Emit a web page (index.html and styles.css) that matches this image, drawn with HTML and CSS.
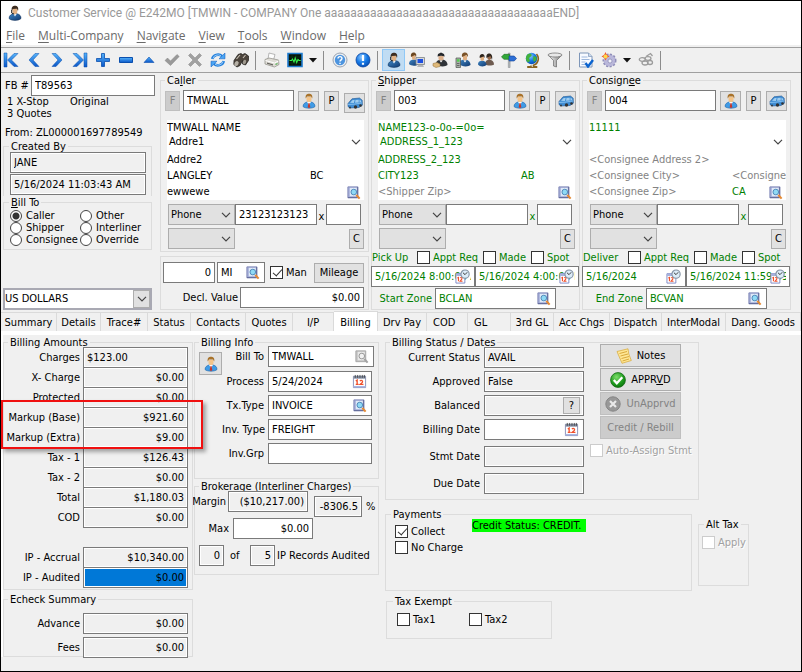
FILE: index.html
```html
<!DOCTYPE html>
<html lang="en">
<head>
<meta charset="utf-8">
<title>Customer Service</title>
<link rel="stylesheet" href="styles.css">
</head>
<body>
<svg class="sprite" aria-hidden="true">
  <defs>
    <linearGradient id="blue" x1="0" y1="0" x2="0" y2="1"><stop offset="0" stop-color="#55b4fb"/><stop offset="1" stop-color="#0a56c8"/></linearGradient>
    <linearGradient id="suit" x1="0" y1="0" x2="1" y2="1"><stop offset="0" stop-color="#3f86c4"/><stop offset="1" stop-color="#123a70"/></linearGradient>
    <linearGradient id="steel" x1="0" y1="0" x2="1" y2="0"><stop offset="0" stop-color="#fff"/><stop offset="1" stop-color="#777"/></linearGradient>
    <radialGradient id="ball" cx=".4" cy=".3" r=".8"><stop offset="0" stop-color="#8fc8ff"/><stop offset=".5" stop-color="#1579e6"/><stop offset="1" stop-color="#0645a8"/></radialGradient>
    <radialGradient id="green" cx=".4" cy=".3" r=".8"><stop offset="0" stop-color="#7ddd6a"/><stop offset=".6" stop-color="#1c9a1c"/><stop offset="1" stop-color="#0a6a0a"/></radialGradient>
  </defs>
  <symbol id="first" viewBox="0 0 16 16"><path d="M1 1h3v14H1z" fill="url(#blue)" stroke="#0a4fae" stroke-width=".5"/><path d="M11 1.500h4L8.500 8l6.500 6.500h-4L4.500 8z" fill="url(#blue)" stroke="#0a4fae" stroke-width=".5"/></symbol>
  <symbol id="prev" viewBox="0 0 16 16"><path d="M9 1.500h4L7 8l6 6.500H9L3 8z" fill="url(#blue)" stroke="#0a4fae" stroke-width=".5"/></symbol>
  <symbol id="next" viewBox="0 0 16 16"><path d="M7 1.500H3L9 8l-6 6.500h4L13 8z" fill="url(#blue)" stroke="#0a4fae" stroke-width=".5"/></symbol>
  <symbol id="last" viewBox="0 0 16 16"><path d="M12 1h3v14h-3z" fill="url(#blue)" stroke="#0a4fae" stroke-width=".5"/><path d="M5 1.500H1L7.500 8 1 14.500h4L11.500 8z" fill="url(#blue)" stroke="#0a4fae" stroke-width=".5"/></symbol>
  <symbol id="plus" viewBox="0 0 16 16"><path d="M6.500 1.500h3v5h5v3h-5v5h-3v-5h-5v-3h5z" fill="url(#blue)" stroke="#0a4fae" stroke-width=".8"/></symbol>
  <symbol id="minus" viewBox="0 0 16 16"><path d="M1.500 5.500h13v5h-13z" fill="url(#blue)" stroke="#0a4fae"/></symbol>
  <symbol id="up" viewBox="0 0 16 16"><path d="M3 10.500 8 5l5 5.500z" fill="url(#blue)" stroke="#0a4fae" stroke-width=".6"/></symbol>
  <symbol id="tick" viewBox="0 0 16 16"><path d="M1 8.500 3.500 6 6.500 9 13 2.500 15.200 4.500 6.500 13.500z" fill="#999" stroke="#858585" stroke-width=".5"/></symbol>
  <symbol id="cross" viewBox="0 0 16 16"><path d="M1.500 3.500 3.500 1.500 8 6l4.500-4.500 2 2L10 8l4.500 4.500-2 2L8 10l-4.500 4.500-2-2L6 8z" fill="#a0a0a0" stroke="#858585" stroke-width=".5"/></symbol>
  <symbol id="refresh" viewBox="0 0 16 16"><path d="M2.300 7A5.800 5 0 0 1 12 4" fill="none" stroke="#2380dd" stroke-width="2.600"/><path d="M9 6.800h6V1z" fill="#4aa5f5" stroke="#0a56b8" stroke-width=".5"/><path d="M13.700 9A5.800 5 0 0 1 4 12" fill="none" stroke="#2380dd" stroke-width="2.600"/><path d="M7 9.200H1V15z" fill="#4aa5f5" stroke="#0a56b8" stroke-width=".5"/><path d="M3 6.500A5 4 0 0 1 11 3.700M13 9.500a5 4 0 0 1-8 2.800" fill="none" stroke="#b6dcfb" stroke-width=".8"/></symbol>
  <symbol id="binoc" viewBox="0 0 16 16"><path d="M5 2.500 8 1.500l1.500 1L12 1.500l3.500 2.500v4.500l-3 4.500-3-1V8.500L7 13.500 4 15 .8 12.500 1 8.500z" fill="#4c443c" stroke="#1d1b18" stroke-width=".7"/><ellipse cx="3.500" cy="11.500" rx="2" ry="2.600" transform="rotate(30 3.500 11.500)" fill="#b5b0a6"/><ellipse cx="11.500" cy="10" rx="1.600" ry="2.300" transform="rotate(20 11.500 10)" fill="#a09a8f"/><path d="M3.500 7 7 3M10 6l2.500-3" stroke="#c9c2b6" stroke-width="1.100"/></symbol>
  <symbol id="printer" viewBox="0 0 16 16"><path d="M5 1l6 1.500L9.500 8 4 7z" fill="#fdfdfd" stroke="#999" stroke-width=".7"/><path d="M1 7.500 5 6l9.500 2 .5 4.500-4.500 2.500L1 12z" fill="#dedcd6" stroke="#8b8983" stroke-width=".7"/><path d="M1.500 8.500 10.500 11 14.500 9" fill="none" stroke="#fff"/><path d="M3 10.500l6 1.700v1.300l-6-1.700z" fill="#66645f"/><path d="M11.500 12.500l2-1" stroke="#4db04d" stroke-width="1.200"/></symbol>
  <symbol id="scope" viewBox="0 0 16 16"><path d="M1 1.500h14v13H1z" fill="#08120a" stroke="#1f7ccf" stroke-width="1.600"/><path d="M2 5h12M2 11h12M5 2.500v11M9 2.500v11" stroke="#0b4a1a" stroke-width=".5"/><path d="M2.500 8.500h2L5.500 7 7 10l1.200-4 1.500 4.500L11 7.500l1 1h1.700" fill="none" stroke="#35ef4d" stroke-width="1.100"/></symbol>
  <symbol id="help" viewBox="0 0 16 16"><circle cx="8" cy="8" r="7" fill="#eceef1" stroke="#9aa4b2"/><circle cx="8" cy="8" r="5.200" fill="#4c94df"/><path d="M6 6.500c0-2.500 4-2.500 4 0C10 7.800 8 8 8 9.600M8 10.800v1.200" fill="none" stroke="#fff" stroke-width="1.400"/></symbol>
  <symbol id="alert" viewBox="0 0 16 16"><circle cx="8" cy="8" r="7" fill="url(#ball)" stroke="#0743a1" stroke-width=".8"/><path d="M8 3v6M8 10.800v2" stroke="#fff" stroke-width="2.200"/></symbol>
  <symbol id="agent" viewBox="0 0 16 16"><path d="M2 13.500C2 10 5 9 6.500 8.500h3C13 9.500 14 11 14 13.500 12 16 4 16 2 13.500z" fill="url(#suit)" stroke="#0d2950" stroke-width=".5"/><path d="M6.300 9 8 11.500 9.700 9z" fill="#eef4fa"/><path d="M5.500 3.500h4.800V7c-.5 3-4.300 3-4.800 0z" fill="#e2b183"/><path d="M4.800 6C4 2 6 .7 8 .7S12 2 11 6l-1-2.200-4.200.2z" fill="#3d2d20"/><path d="M4.700 5v3l2.500 1.200" fill="none" stroke="#222"/></symbol>
  <symbol id="agentpc" viewBox="0 0 16 16"><path d="M0 12c0-3 2-4 4-4.500 4 0 5 2 5 5-2 1.700-7 1.700-9-.5z" fill="url(#suit)"/><path d="M3 3h3.500v4L4.500 8 3 6.500z" fill="#e2b183"/><path d="M2 5C1.500 1.500 3 .5 4.700.5S8 2 7 5L6 3z" fill="#6b4722"/><path d="M7 5.500h8.500v7H7z" fill="#d6d8da" stroke="#7f8387" stroke-width=".8"/><path d="M8.500 7H14v4H8.500z" fill="#1d4ee0"/><path d="M9 13h5l1 2H8z" fill="#b3b6b9"/></symbol>
  <symbol id="driver" viewBox="0 0 16 16"><path d="M4 12c0-3 2-4 5-4.500 4 0 6.500 2 6.500 5.500-2 2-9 2-11.500-1z" fill="#2f3338"/><path d="M6.500 4h5v3c-.7 2-4.200 2-5 0z" fill="#dcb08b"/><path d="M5.500 4.500 6 2l3-1.500 3 1.500.7 2.500C10 3.600 8 3.600 5.500 4.500z" fill="#24262a"/><path d="M7.500 8.500 9 10.500l1.700-2z" fill="#fff"/><path d="M1 11.500l4-1 3 1.500v2.500l-4 1-3-1.500z" fill="#dfb97a" stroke="#8f6e3a" stroke-width=".5"/></symbol>
  <symbol id="phone" viewBox="0 0 16 16"><path d="M4 12c0-3 2-4 5-4.500 4 0 6.500 2 6.500 5.500-2 2-9 2-11.500-1z" fill="url(#suit)"/><path d="M8 3.500h4V7c-.7 2-3.500 2-4 0z" fill="#e2b183"/><path d="M7 5C6.500 1.500 8 .5 10 .5S13.500 2 12.800 5L11.500 3z" fill="#7a5228"/><path d="M8.500 8.500 10 10.500l1.500-2z" fill="#fff"/><path d="M1 6h4.500v9.500H1z" fill="#a9b0a9" stroke="#4f554f" stroke-width=".7"/><path d="M2 7.200h2.500v2.500H2z" fill="#53cf50"/><path d="M2 11.500h2.500M2 13.500h2.500" stroke="#555" stroke-width=".8"/></symbol>
  <symbol id="people" viewBox="0 0 16 16"><path d="M7 12c0-3 2-4 4-4.500 3 .3 5 2 5 5-2 1.500-7 1.500-9-.5z" fill="#6e5b50"/><path d="M9.500 3.500H13V7l-1.700 1L9.500 7z" fill="#9a6a4a"/><path d="M8.500 6C8 2.500 9.500 1.500 11.200 1.500S15 3 14 8L12.500 4z" fill="#322820"/><path d="M0 12.500c0-3 2-3.500 4-4 3 .3 4.500 2 4.500 4.500-2 2-7 2-8.500-.5z" fill="url(#suit)"/><path d="M2.500 4.500H6V8L4.200 9 2.500 8z" fill="#e2b183"/><path d="M1.700 6C1.200 3 2.700 2 4.200 2S7 3 6.500 6L5.500 4.500z" fill="#2e241c"/></symbol>
  <symbol id="sign" viewBox="0 0 16 16"><path d="M7.300 1h1.800v14.500H7.300z" fill="#b5b9bd" stroke="#6d7175" stroke-width=".4"/><path d="M.5 5 3 2.300h5.500v5H3z" fill="#31a838" stroke="#12641a" stroke-width=".6"/><path d="M15.500 6.500 13.200 4H8v5h5.200z" fill="#2d6fd6" stroke="#123f93" stroke-width=".6"/></symbol>
  <symbol id="globe" viewBox="0 0 16 16"><path d="M12.500 2a7 7 0 0 1-3 11.300v1.500h3v1H4v-1h3v-1.300" fill="none" stroke="#8a6420" stroke-width="1.600"/><circle cx="7.500" cy="6.500" r="5.700" fill="url(#ball)"/><path d="M4 2c3-1.500 4 0 3.500 2L5 6l1 3-2 1.500C1 8 1.500 4 4 2zM9.500 4l3 1v3l-2.500 2-1-2.500z" fill="#43b23d"/></symbol>
  <symbol id="funnel" viewBox="0 0 16 16"><path d="M1 3l5.500 5.500V14l3 1V8.500L15 3z" fill="url(#steel)" stroke="#696969" stroke-width=".7"/><ellipse cx="8" cy="3" rx="7" ry="2" fill="#e9e9e9" stroke="#777" stroke-width=".8"/></symbol>
  <symbol id="doccheck" viewBox="0 0 16 16"><path d="M1.500 1h9L14 4.500V15H1.500z" fill="#f7faff" stroke="#7e96b8"/><path d="M10.500 1v3.500H14" fill="#c9d8ec" stroke="#7e96b8" stroke-width=".7"/><path d="M3.500 5h6M3.500 7.500h8M3.500 10h4M3.500 12.500h4" stroke="#9db7dc"/><path d="M7.500 11l2.500 3.500L15 8" fill="none" stroke="#0a63cf" stroke-width="2.400"/></symbol>
  <symbol id="gear" viewBox="0 0 16 16"><circle cx="8.500" cy="8.500" r="6" fill="#b2b0d6" stroke="#8f8db8" stroke-width="2" stroke-dasharray="2 1.500"/><circle cx="8.500" cy="8.500" r="5.500" fill="#b9b7da"/><circle cx="9" cy="9" r="2" fill="#f3f3fa" stroke="#7a78a8" stroke-width=".6"/><path d="M4.500 0l1.300 2.700L8.500 4.500 5.800 5.800 4.500 8.500 3.200 5.800.5 4.500l2.700-1.800z" fill="#f0582f"/><circle cx="4.500" cy="4.400" r="2" fill="#ffd948"/></symbol>
  <symbol id="chain" viewBox="0 0 16 16"><g fill="none" stroke="#9c9c9c" stroke-width="1.300"><ellipse cx="4.300" cy="7.500" rx="3" ry="1.800"/><ellipse cx="10" cy="6.500" rx="3" ry="1.800"/><ellipse cx="7" cy="11" rx="3" ry="2"/><ellipse cx="12" cy="10.500" rx="2.500" ry="2"/><path d="M8 4.500 12.500 1.500 14.500 4"/></g></symbol>
  <symbol id="user" viewBox="0 0 16 16"><path d="M2 13.500C2 10.500 4.500 9.500 6 9h4c2.500.5 4 2 4 4.500-2 2.200-10 2.200-12 0z" fill="#3f9be6" stroke="#1b62a8" stroke-width=".6"/><path d="M6 9l2 3 2-3z" fill="#fff"/><path d="M7.500 10h1l.8 4L8 15.200 6.700 14z" fill="#c5372c"/><path d="M5.500 4h5v3.200c-.7 2.600-4.300 2.600-5 0z" fill="#f4c489"/><path d="M4.700 5.500C4.200 1.800 6 .8 8 .8s3.800 1 3.300 4.700L10 3.500H6z" fill="#a8722a"/></symbol>
  <symbol id="car" viewBox="0 0 16 16"><path d="M1 8.500 5 3.800 12.500 3l2.700 2.200.2 5-3.400 2.300-9.500.5-1.500-1.800z" fill="#3f8dd4" stroke="#1f5692" stroke-width=".6"/><path d="M3 7.800 5.700 4.900l2 .1-.8 3zM8.500 5l3.200-.3v2.700L8 7.800zM12.500 4.700l1.700 1v1.400l-1.700.4z" fill="#9fcdf0"/><path d="M1 9.500l6-.3 8-1.300" fill="none" stroke="#8fc7f2" stroke-width=".8"/><circle cx="8.500" cy="12" r="1.700" fill="#333"/><circle cx="13.500" cy="10.500" r="1.300" fill="#333"/><circle cx="3" cy="12.500" r=".9" fill="#333"/></symbol>
  <symbol id="search" viewBox="0 0 16 16"><path d="M2 2h10.500v11.500H2z" fill="#a3abd6" stroke="#8088b8"/><path d="M4 3h7.500v9H4z" fill="#dfeaf8"/><path d="M12.500 2v11.500H2" fill="none" stroke="#5c6494"/><circle cx="8.300" cy="7.500" r="3" fill="#8fdaf5" stroke="#4d86b8"/><path d="M11 10.500l3.500 4" stroke="#e58a34" stroke-width="2.300"/></symbol>
  <symbol id="searchgray" viewBox="0 0 16 16"><path d="M2 2h10.500v11.500H2z" fill="#c3c3c3" stroke="#a5a5a5"/><path d="M4 3h7.500v9H4z" fill="#e9e9e9"/><circle cx="8.300" cy="7.500" r="3" fill="#f2f2f2" stroke="#939393"/><path d="M11 10.500l3.500 4" stroke="#a3a3a3" stroke-width="2.300"/></symbol>
  <symbol id="cal" viewBox="0 0 16 16"><path d="M1.500 2.500h13v12h-13z" fill="#fff" stroke="#8990b8"/><path d="M1.500 2h13v3h-13z" fill="#8791a5"/><path d="M3.500 1v3M6 1v3M8.500 1v3M11 1v3M13.200 1v3" stroke="#333" stroke-width=".8"/><path d="M4 7.500 5.500 6.500V11M4 11h3M8.500 7.500c1-1.500 3.500-.5 2.500 1.500L8.700 11h3.500" fill="none" stroke="#f0502c" stroke-width="1.400"/><path d="M1.500 13.500h13" stroke="#a9b6e4" stroke-width="1.500"/></symbol>
  <symbol id="calclock" viewBox="0 0 16 16"><path d="M1 5h9.500v10H1z" fill="#fff" stroke="#7d88c4"/><path d="M1 5h9.500v2.500H1z" fill="#a6b2dd"/><path d="M2.500 9.500 3.700 9v4M5.500 9.500c1-1 2.500 0 1.700 1.300L5.500 13H8" fill="none" stroke="#f0502c" stroke-width="1.200"/><circle cx="10.700" cy="5.500" r="4.400" fill="#dcecf8" stroke="#8493a4" stroke-width="1.200"/><path d="M8.500 4 10.700 6 13 3.500" fill="none" stroke="#333"/></symbol>
  <symbol id="note" viewBox="0 0 16 16"><path d="M1 3.500 12 .8 12.800 6l2.500 6.500L6 15.300z" fill="#ffe795" stroke="#d6a634" stroke-width=".7"/><path d="M3.500 5.500 11 3.500M4.500 8 12 6M5.500 10.500 13 8.500M6.500 13l6.500-2" stroke="#d3a031" stroke-width=".9"/></symbol>
  <symbol id="ok" viewBox="0 0 16 16"><circle cx="8" cy="8" r="7.400" fill="url(#green)" stroke="#126912" stroke-width=".8"/><path d="M3.800 8l3 3.300 5.500-6" fill="none" stroke="#fff" stroke-width="2.300"/></symbol>
  <symbol id="no" viewBox="0 0 16 16"><circle cx="8" cy="8" r="7.200" fill="#989898" stroke="#858585"/><path d="M5 5l6 6M11 5l-6 6" stroke="#e9e9e9" stroke-width="2.200"/></symbol>
  <symbol id="chev" viewBox="0 0 10 6"><path d="M1 .8 5 4.800 9 .8" fill="none" stroke="#444" stroke-width="1.200"/></symbol>
  <symbol id="drop" viewBox="0 0 8 5"><path d="M0 0h8L4 4.500z" fill="#111"/></symbol>
</svg>

<div class="window">
  <header class="titlebar"><svg class="ico"><use href="#agent"/></svg><span>Customer Service @ E242MO [TMWIN - COMPANY One aaaaaaaaaaaaaaaaaaaaaaaaaaaaaaaaaaaEND]</span></header>
  <nav class="menu">
    <a href="#"><u>F</u>ile</a><a href="#"><u>M</u>ulti-Company</a><a href="#"><u>N</u>avigate</a><a href="#"><u>V</u>iew</a><a href="#"><u>T</u>ools</a><a href="#"><u>W</u>indow</a><a href="#"><u>H</u>elp</a>
  </nav>
  <div class="toolbar">
    <button aria-label="First"><svg class="ico"><use href="#first"/></svg></button><button aria-label="Previous"><svg class="ico"><use href="#prev"/></svg></button><button aria-label="Next"><svg class="ico"><use href="#next"/></svg></button><button aria-label="Last"><svg class="ico"><use href="#last"/></svg></button><button aria-label="Add"><svg class="ico"><use href="#plus"/></svg></button><button aria-label="Delete"><svg class="ico"><use href="#minus"/></svg></button><button aria-label="Edit"><svg class="ico"><use href="#up"/></svg></button><button aria-label="Post"><svg class="ico"><use href="#tick"/></svg></button><button aria-label="Cancel"><svg class="ico"><use href="#cross"/></svg></button><button aria-label="Refresh"><svg class="ico"><use href="#refresh"/></svg></button><button aria-label="Find"><svg class="ico"><use href="#binoc"/></svg></button>
    <i class="sep"></i>
    <button aria-label="Print"><svg class="ico"><use href="#printer"/></svg></button><button aria-label="Monitor"><svg class="ico"><use href="#scope"/></svg></button><button class="more" aria-label="More"><svg class="arrow"><use href="#drop"/></svg></button>
    <i class="sep"></i>
    <button aria-label="Help"><svg class="ico"><use href="#help"/></svg></button><button aria-label="Alert"><svg class="ico"><use href="#alert"/></svg></button>
    <i class="sep"></i>
    <button class="on" aria-label="Customer service"><svg class="ico"><use href="#agent"/></svg></button><button aria-label="Dispatch"><svg class="ico"><use href="#agentpc"/></svg></button><button aria-label="Driver"><svg class="ico"><use href="#driver"/></svg></button><button aria-label="Mobile"><svg class="ico"><use href="#phone"/></svg></button><button aria-label="Clients"><svg class="ico"><use href="#people"/></svg></button><button aria-label="Route"><svg class="ico"><use href="#sign"/></svg></button><button aria-label="Map"><svg class="ico"><use href="#globe"/></svg></button><button aria-label="Filter"><svg class="ico"><use href="#funnel"/></svg></button>
    <i class="sep"></i>
    <button aria-label="Validate"><svg class="ico"><use href="#doccheck"/></svg></button><button aria-label="Options"><svg class="ico"><use href="#gear"/></svg></button><button class="more" aria-label="More options"><svg class="arrow"><use href="#drop"/></svg></button><button aria-label="Links"><svg class="ico"><use href="#chain"/></svg></button>
    <i class="sep"></i>
  </div>

  <main>
  <section class="upper">
    <div class="left">
      <div class="fb"><label for="fb">FB #</label><input class="box" id="fb" value="T89563"></div>
      <div class="stops"><span>1 X-Stop</span><span>Original</span><span>3 Quotes</span></div>
      <div class="from">From: ZL000001697789549</div>
      <fieldset class="created"><legend>Created By</legend>
        <input class="box ro" aria-label="Created by" value="JANE" readonly>
        <input class="box ro" aria-label="Created on" value="5/16/2024 11:03:43 AM" readonly>
      </fieldset>
      <fieldset class="billto"><legend><u>B</u>ill To</legend>
        <label><input type="radio" name="bt" checked>Caller</label><label><input type="radio" name="bt">Other</label>
        <label><input type="radio" name="bt">Shipper</label><label><input type="radio" name="bt">Interliner</label>
        <label><input type="radio" name="bt">Consignee</label><label><input type="radio" name="bt">Override</label>
      </fieldset>
      <span class="sel currency"><select aria-label="Currency"><option>US DOLLARS</option></select><span class="cap"><svg class="chev"><use href="#chev"/></svg></span></span>
    </div>

    <div class="party">
      <fieldset><legend>Ca<u>l</u>ler</legend>
        <div class="idrow"><button class="btn" disabled>F</button><input class="box" aria-label="Caller code" value="TMWALL"><button class="btn wide" aria-label="Contact"><svg class="ico"><use href="#user"/></svg></button><button class="btn">P</button><button class="btn wide low" aria-label="Vehicle"><svg class="ico"><use href="#car"/></svg></button></div>
        <div class="addr"><span>TMWALL NAME</span><span class="a1">Addre1</span><span class="a2">Addre2</span><span class="pair"><span>LANGLEY</span><span>BC</span></span><span class="pair"><span>ewwewe</span></span><svg class="chev"><use href="#chev"/></svg><svg class="ico"><use href="#search"/></svg></div>
        <div class="phone"><span class="sel"><select aria-label="Caller contact type"><option>Phone</option></select><svg class="chev"><use href="#chev"/></svg></span><input class="box" aria-label="Caller phone" value="23123123123"><label for="cx">x</label><input class="box ext" id="cx"></div>
        <div class="phone"><span class="sel"><select aria-label="Caller contact"><option></option></select><svg class="chev"><use href="#chev"/></svg></span><button class="btn c">C</button></div>
      </fieldset>
      <div class="mileage">
        <div class="mrow"><input class="box num dist" aria-label="Distance" value="0"><span class="field unit"><input class="box" aria-label="Unit" value="MI"><svg class="ico"><use href="#search"/></svg></span><label class="ck"><input type="checkbox" checked>Man</label><button class="btn">Mileage</button></div>
        <div class="mrow"><label class="decl" for="dv">Decl. Value</label><input class="box num" id="dv" value="$0.00"></div>
      </div>
    </div>

    <div class="party go">
      <fieldset><legend><u>S</u>hipper</legend>
        <div class="idrow"><button class="btn" disabled>F</button><input class="box" aria-label="Shipper code" value="003"><button class="btn wide" aria-label="Contact"><svg class="ico"><use href="#user"/></svg></button><button class="btn">P</button><button class="btn wide" aria-label="Vehicle"><svg class="ico"><use href="#car"/></svg></button></div>
        <div class="addr"><span>NAME123-o-0o-=0o=</span><span class="a1">ADDRESS_1_123</span><span class="a2">ADDRESS_2_123</span><span class="pair"><span>CITY123</span><span>AB</span></span><span class="pair hint"><span>&lt;Shipper Zip&gt;</span></span><svg class="chev"><use href="#chev"/></svg><svg class="ico"><use href="#search"/></svg></div>
        <div class="phone"><span class="sel"><select aria-label="Shipper contact type"><option>Phone</option></select><svg class="chev"><use href="#chev"/></svg></span><input class="box" aria-label="Shipper phone"><label for="sx">x</label><input class="box ext" id="sx"></div>
        <div class="phone"><span class="sel"><select aria-label="Shipper contact"><option></option></select><svg class="chev"><use href="#chev"/></svg></span><button class="btn c">C</button></div>
        <div class="flags"><span class="lead">Pick Up</span><label class="ck"><input type="checkbox">Appt Req</label><label class="ck"><input type="checkbox">Made</label><label class="ck"><input type="checkbox">Spot</label></div>
        <div class="dates"><span class="field"><input class="box" aria-label="Pick up from" value="5/16/2024 8:00:00 AM"><svg class="ico"><use href="#calclock"/></svg></span><span class="field"><input class="box" aria-label="Pick up to" value="5/16/2024 4:00:00 PM"><svg class="ico"><use href="#calclock"/></svg></span></div>
        <div class="zone"><label for="sz">Start Zone</label><span class="field"><input class="box" id="sz" value="BCLAN"><svg class="ico"><use href="#search"/></svg></span></div>
      </fieldset>
    </div>

    <div class="party go">
      <fieldset><legend>Consign<u>e</u>e</legend>
        <div class="idrow"><button class="btn" disabled>F</button><input class="box" aria-label="Consignee code" value="004"><button class="btn wide" aria-label="Contact"><svg class="ico"><use href="#user"/></svg></button><button class="btn">P</button><button class="btn wide" aria-label="Vehicle"><svg class="ico"><use href="#car"/></svg></button></div>
        <div class="addr"><span>11111</span><span class="a1">&nbsp;</span><span class="a2 hint">&lt;Consignee Address 2&gt;</span><span class="pair hint"><span>&lt;Consignee City&gt;</span><span>&lt;Consigne</span></span><span class="pair"><span class="hint">&lt;Consignee Zip&gt;</span><span>CA</span></span><svg class="chev"><use href="#chev"/></svg><svg class="ico"><use href="#search"/></svg></div>
        <div class="phone"><span class="sel"><select aria-label="Consignee contact type"><option>Phone</option></select><svg class="chev"><use href="#chev"/></svg></span><input class="box" aria-label="Consignee phone"><label for="nx">x</label><input class="box ext" id="nx"></div>
        <div class="phone"><span class="sel"><select aria-label="Consignee contact"><option></option></select><svg class="chev"><use href="#chev"/></svg></span><button class="btn c">C</button></div>
        <div class="flags"><span class="lead">Deliver</span><label class="ck"><input type="checkbox">Appt Req</label><label class="ck"><input type="checkbox">Made</label><label class="ck"><input type="checkbox">Spot</label></div>
        <div class="dates"><span class="field"><input class="box" aria-label="Deliver from" value="5/16/2024"><svg class="ico"><use href="#calclock"/></svg></span><span class="field"><input class="box" aria-label="Deliver to" value="5/16/2024 11:59:59"><svg class="ico"><use href="#calclock"/></svg></span></div>
        <div class="zone"><label for="ez">End Zone</label><span class="field"><input class="box" id="ez" value="BCVAN"><svg class="ico"><use href="#search"/></svg></span></div>
      </fieldset>
    </div>
  </section>

  <nav class="tabs">
    <a href="#">Summary</a><a href="#">Details</a><a href="#">Trace#</a><a href="#">Status</a><a href="#">Contacts</a><a href="#">Quotes</a><a href="#">I/P</a><a href="#" class="on">Billing</a><a href="#">Drv Pay</a><a href="#" class="start">COD</a><a href="#" class="start">GL</a><a href="#">3rd GL</a><a href="#">Acc Chgs</a><a href="#">Dispatch</a><a href="#">InterModal</a><a href="#">Dang. Goods</a>
  </nav>

  <section class="pane">
    <div class="amounts">
      <fieldset class="bill"><legend>Billing Amounts</legend>
        <div class="row"><label for="b1">Charges</label><input class="box ro" id="b1" value="$123.00" readonly></div>
        <div class="row"><label for="b2">X- Charge</label><input class="box ro num" id="b2" value="$0.00" readonly></div>
        <div class="row"><label for="b3">Protected</label><input class="box ro num" id="b3" value="$0.00" readonly></div>
        <div class="row"><label for="b4">Markup (Base)</label><input class="box ro num" id="b4" value="$921.60" readonly></div>
        <div class="row"><label for="b5">Markup (Extra)</label><input class="box ro num" id="b5" value="$9.00" readonly></div>
        <div class="row"><label for="b6">Tax - 1</label><input class="box ro num" id="b6" value="$126.43" readonly></div>
        <div class="row"><label for="b7">Tax - 2</label><input class="box ro num" id="b7" value="$0.00" readonly></div>
        <div class="row"><label for="b8">Total</label><input class="box ro num" id="b8" value="$1,180.03" readonly></div>
        <div class="row"><label for="b9">COD</label><input class="box ro num" id="b9" value="$0.00" readonly></div>
        <div class="row apart"><label for="b10">IP - Accrual</label><input class="box ro num" id="b10" value="$10,340.00" readonly></div>
        <div class="row"><label for="b11">IP - Audited</label><input class="box ro num picked" id="b11" value="$0.00" readonly></div>
        <div class="marker"></div>
      </fieldset>
      <fieldset class="echeck"><legend>Echeck Summary</legend>
        <div class="row"><label for="e1">Advance</label><input class="box ro num" id="e1" value="$0.00" readonly></div>
        <div class="row"><label for="e2">Fees</label><input class="box ro num" id="e2" value="$0.00" readonly></div>
      </fieldset>
    </div>

    <div class="info">
      <fieldset class="binfo"><legend>Billing Info</legend>
        <button class="btn" aria-label="Bill-to contact"><svg class="ico"><use href="#user"/></svg></button>
        <div class="lines">
          <label for="i1">Bill To</label><span class="field first"><input class="box" id="i1" value="TMWALL"><svg class="ico"><use href="#searchgray"/></svg></span>
          <label for="i2">Process</label><span class="field"><input class="box" id="i2" value="5/24/2024"><svg class="ico"><use href="#cal"/></svg></span>
          <label for="i3">Tx.Type</label><span class="field"><input class="box" id="i3" value="INVOICE"><svg class="ico"><use href="#search"/></svg></span>
          <label for="i4">Inv. Type</label><input class="box" id="i4" value="FREIGHT">
          <label for="i5">Inv.Grp</label><input class="box" id="i5">
        </div>
      </fieldset>
      <fieldset class="broker"><legend>Brokerage (Interliner Charges)</legend>
        <div class="brow"><label for="k1">Margin</label><input class="box ro num amt" id="k1" value="($10,217.00)" readonly><input class="box ro num pct" aria-label="Margin percent" value="-8306.5" readonly><span class="sign">%</span></div>
        <div class="brow"><label class="max" for="k2">Max</label><input class="box num amt" id="k2" value="$0.00"></div>
        <div class="brow audit"><input class="box ro num tiny" aria-label="Audited" value="0" readonly><span>of</span><input class="box ro num tiny" aria-label="Records" value="5" readonly><span>IP Records Audited</span></div>
      </fieldset>
    </div>

    <div class="rest">
      <fieldset class="status"><legend>Billing Status / Dates</legend>
        <div class="lines">
          <label for="s1">Current Status</label><input class="box ro" id="s1" value="AVAIL" readonly>
          <label for="s2">Approved</label><input class="box ro" id="s2" value="False" readonly>
          <label for="s3">Balanced</label><span class="field"><input class="box ro" id="s3" readonly><button class="btn q">?</button></span>
          <label for="s4">Billing Date</label><span class="field"><input class="box" id="s4"><svg class="ico"><use href="#cal"/></svg></span>
          <label class="gap" for="s5">Stmt Date</label><input class="box ro gap" id="s5" readonly>
          <label class="gap" for="s6">Due Date</label><input class="box ro gap" id="s6" readonly>
        </div>
        <div class="acts">
          <button class="btn"><svg class="ico"><use href="#note"/></svg>Notes</button>
          <button class="btn"><svg class="ico"><use href="#ok"/></svg><span>APPR<u>V</u>D</span></button>
          <button class="btn" disabled><svg class="ico"><use href="#no"/></svg>UnApprvd</button>
          <button class="btn" disabled>Credit / Rebill</button>
          <label class="ck off"><input type="checkbox" disabled>Auto-Assign Stmt</label>
        </div>
      </fieldset>
      <div class="payrow">
        <fieldset class="pay"><legend>Payments</legend>
          <div class="cks"><label class="ck"><input type="checkbox" checked>Collect</label><label class="ck"><input type="checkbox">No Charge</label></div>
          <mark>Credit Status: CREDIT.</mark>
        </fieldset>
        <fieldset class="alt"><legend>Alt Tax</legend><label class="ck off"><input type="checkbox" disabled>Apply</label></fieldset>
      </div>
      <fieldset class="exempt"><legend>Tax Exempt</legend><label class="ck"><input type="checkbox">Tax1</label><label class="ck"><input type="checkbox">Tax2</label></fieldset>
    </div>
  </section>
  </main>
</div>
</body>
</html>
```
FILE: styles.css
```css
* { box-sizing: border-box; }
body { margin: 0; background: #f0f0f0; }
body, button, input, select {
  font-family: "DejaVu Sans Condensed", "DejaVu Sans", Tahoma, sans-serif;
  font-size: 11px;
  line-height: 14px;
  color: #000;
}
a { color: inherit; text-decoration: none; }
.sprite { position: absolute; width: 0; height: 0; }
.ico { width: 16px; height: 16px; flex: none; display: block; }
.chev { width: 10px; height: 6px; }
.window { min-height: 100vh; border: 1px solid #000; overflow: hidden; display: flex; flex-direction: column; }

.titlebar, .menu { background: #fff; font-size: 12px; white-space: nowrap; }
.titlebar { height: 23px; padding-left: 6px; display: flex; align-items: center; gap: 5px; color: #999; font-family: Roboto, "Open Sans", sans-serif; }
.menu { height: 23px; padding: 3px 5px 0; display: flex; align-items: center; gap: 13px; color: #6a6a6a; border-bottom: 2px solid #f0f0f0; font-family: "Open Sans", "Noto Sans", sans-serif; }
.menu u { text-underline-offset: 2px; }

.toolbar { height: 26px; border: 1px solid #a0a0a0; border-width: 1px 0; display: flex; align-items: center; margin-left: -2px; }
.toolbar button { width: 23px; height: 22px; padding: 0; border: 1px solid transparent; background: none; display: flex; align-items: center; justify-content: center; flex: none; }
.toolbar .on { background: #c0dcf3; border-color: #90c8f6; }
.toolbar .more { width: 14px; }
.arrow { width: 8px; height: 5px; }
.sep { width: 1px; height: 19px; background: #8c8c8c; margin: 0 4px 0 3px; }

fieldset { margin: 0; padding: 0; min-width: 0; border: 1px solid #dcdcdc; }
legend { height: 8px; line-height: 8px; margin-left: 4px; padding: 1px 2px 0; white-space: nowrap; }
label, .sel, .field { white-space: nowrap; }

.box { display: block; width: 100%; min-width: 0; height: 21px; margin: 0; padding: 0 3px 1px; border: 1px solid #7a7a7a; border-radius: 0; background: #fff; }
.ro { background: #f0f0f0; box-shadow: inset 0 0 0 1px #fff; }
.num { text-align: right; }
.picked { background: #0078d7; }
.field { position: relative; display: block; min-width: 0; }
.field .ico { position: absolute; right: 5px; top: 3px; width: 15px; height: 15px; }

.btn { height: 20px; padding: 0; border: 1px solid #adadad; background: #e1e1e1; display: flex; align-items: center; justify-content: center; flex: none; }
.btn:disabled { background: #ccc; border-color: #bfbfbf; color: #838383; }

.sel { position: relative; display: block; }
.sel select { appearance: none; display: block; width: 100%; height: 21px; padding: 0 2px; border: 1px solid #adadad; border-radius: 0; background: #e1e1e1; }
.sel > .chev { position: absolute; right: 4px; top: 8px; }

.ck { display: flex; align-items: center; gap: 3px; height: 13px; }
input[type="checkbox"] { appearance: none; position: relative; width: 13px; height: 13px; margin: 0; border: 1px solid #333; background: #fff; flex: none; }
input[type="checkbox"]:checked::before { content: ""; position: absolute; left: 4px; top: 0; width: 4px; height: 8px; border: solid #333; border-width: 0 1px 1px 0; transform: rotate(42deg); }
input[type="checkbox"]:disabled { border-color: #ccc; }
.off { color: #a0a0a0; text-shadow: 1px 1px #fff; }
input[type="radio"] { appearance: none; width: 12px; height: 12px; margin: 0; border: 1px solid #444; border-radius: 50%; background: #fff; flex: none; }
input[type="radio"]:checked { background: radial-gradient(#333 0 3px, #fff 4px); }

.upper { display: grid; grid-template-columns: 152px repeat(3, minmax(0, 1fr)); column-gap: 2px; padding: 2px 10px 2px 2px; }
.left { display: flex; flex-direction: column; }
.fb { display: flex; align-items: center; padding-left: 2px; }
.fb label { width: 26px; flex: none; }
.stops { display: grid; grid-template-columns: 63px 1fr; line-height: 12px; padding-left: 4px; }
.from { margin-top: 6px; padding-left: 2px; white-space: nowrap; }
.left fieldset { margin: 2px 3px 0 0; }
.left legend { margin-left: -1px; }
.created { padding: 2px 5px 1px 6px; border-bottom: 0; display: grid; row-gap: 1px; }
.billto { padding: 4px 0 3px 6px; display: grid; grid-template-columns: 70px 1fr; }
.billto label { display: flex; align-items: center; gap: 4px; height: 12px; }
.currency { margin: auto 3px 0 0; }
.currency select { height: 22px; padding: 0; border: 2px solid #a9a9b3; background: #fff; }
.cap { position: absolute; right: 2px; top: 2px; width: 17px; height: 18px; border: 1px solid #adadad; background: #e1e1e1; display: flex; align-items: center; justify-content: center; }

.party { padding-top: 1px; }
.party:nth-child(2) { margin-left: 3px; margin-right: -2px; }
.party:nth-child(3) { margin-left: 2px; margin-right: -1px; }
.party:nth-child(4) { margin-left: 1px; }
.go { color: #008000; }
.go legend { color: #000; }
.go .box { color: #008000; }
.idrow { display: flex; align-items: center; padding: 6px 3px 0 4px; height: 27px; }
.idrow .btn { width: 15px; }
.idrow .box { margin: 0 4px 0 3px; flex: 1; color: #000; }
.idrow .wide { width: 21px; }
.idrow .btn + .btn { margin-left: 5px; }
.idrow .low { margin-top: 4px; }
.addr { position: relative; height: 80px; margin: 9px 4px 4px 6px; padding: 1px 0 0; background: #fff; overflow: hidden; display: flex; flex-direction: column; white-space: nowrap; }
.addr .a1 { padding-left: 2px; }
.addr .a2 { margin-top: 4px; margin-bottom: 2px; }
.pair { display: grid; grid-template-columns: 143px 1fr; margin-bottom: 2px; }
.hint { color: #838383; }
.addr .chev { position: absolute; right: 3px; top: 19px; }
.addr .ico { position: absolute; right: 3px; bottom: 0; width: 15px; height: 15px; }
.phone { display: flex; align-items: center; margin: 0 7px 3px 7px; }
.phone:nth-of-type(4) { margin: 0 4px 2px 7px; }
.phone .sel { width: 67px; flex: none; }
.phone .sel select { color: #000; }
.phone .box { flex: 1; }
.phone label { width: 9px; text-align: center; padding-top: 4px; flex: none; }
.phone .ext { flex: none; width: 35px; }
.phone .c { width: 15px; margin-left: auto; }
.mileage { margin-top: 4px; border: 1px solid #dcdcdc; padding: 5px 4px 1px 2px; display: grid; row-gap: 4px; }
.mrow { display: flex; align-items: center; gap: 2px; }
.dist { width: 52px; flex: none; }
.unit { width: 48px; flex: none; }
.mrow .ck { margin-left: 3px; }
.mrow .btn { width: 50px; margin-left: auto; }
.decl { width: 75px; text-align: right; flex: none; }
.flags { display: flex; height: 13px; align-items: center; margin-bottom: 2px; }
.flags .lead { width: 45px; flex: none; }
.flags .ck { width: 66px; flex: none; }
.flags .ck:nth-child(3) { width: 48px; }
.flags .ck:nth-child(4) { width: auto; }
.dates { display: grid; grid-template-columns: 1fr 1fr; margin: 0 0 1px -1px; }
.zone { display: grid; grid-template-columns: 60px 1fr; column-gap: 3px; align-items: center; padding-right: 23px; }
.zone label { text-align: right; }

.tabs { display: grid; grid-template-columns: 56fr 44fr 47fr 43fr 55fr 47fr 41fr 44fr 49fr 41fr 43fr 43fr 56fr 52fr 64fr 75fr; height: 19px; }
.tabs a { min-width: 0; white-space: nowrap; border: 1px solid #dadada; border-width: 1px 1px 0 0; display: flex; align-items: center; justify-content: center; padding-top: 2px; }
.tabs .on { background: #fff; margin-top: -1px; }
.tabs .start { justify-content: flex-start; padding-left: 6px; }

.pane { border: solid #fff; border-width: 4px 0 0 2px; padding-top: 3px; display: grid; grid-template-columns: minmax(0, 190fr) minmax(0, 185fr) minmax(0, 421fr); column-gap: 1px; }
.rest { margin-left: 5px; }
.row { display: grid; grid-template-columns: 76px 1fr; column-gap: 3px; align-items: center; margin: 0 4px -1px 0; }
.row label, .lines label { text-align: right; }
.bill { position: relative; padding: 1px 0 2px; }
.apart { margin-top: 20px; }
.marker { position: absolute; left: -3px; right: -11px; top: 54px; height: 49px; border: 2px solid #f01010; box-shadow: 3px 3px 4px #0005; }
.echeck { margin-top: 5px; padding-top: 10px; }
.echeck .row + .row { margin-top: 4px; margin-bottom: -2px; }

.binfo { display: flex; padding: 0 6px 14px 4px; }
.info legend { margin-left: 0; }
.binfo .btn { width: 23px; height: 23px; margin-top: 6px; }
.lines { display: grid; align-items: center; row-gap: 3px; column-gap: 4px; }
.binfo .lines { flex: 1; grid-template-columns: 42px minmax(0, 1fr); }
.binfo .first { margin: 0 -2px 1px 0; }
.broker { margin-top: 3px; padding: 1px 0 8px 4px; }
.brow { display: flex; }
.brow label { width: 27px; margin-right: 2px; line-height: 21px; display: flex; justify-content: flex-end; flex: none; }
.brow .max { width: 30px; margin: 0 4px 0 0; }
.brow .amt { width: 80px; flex: none; }
.brow .pct { width: 48px; margin: 5px 4px 0 6px; flex: none; }
.sign { padding-top: 9px; }
.brow + .brow { margin-top: 1px; }
.brow .tiny { width: 25px; flex: none; }
.brow.audit { margin-top: 6px; align-items: center; white-space: nowrap; }
.audit span { margin-left: 6px; width: 20px; }
.audit span:last-child { margin-left: 2px; width: auto; }

.status { margin-right: 102px; padding: 1px 0 5px; display: flex; }
.status .lines { flex: 1; grid-template-columns: 94px minmax(0, 1fr); }
.status .gap { margin-top: 3px; }
.q { position: absolute; right: 4px; top: 2px; width: 17px; height: 17px; }
.acts { width: 108px; flex: none; margin: -3px 0 0 6px; display: flex; flex-direction: column; row-gap: 1px; }
.acts .btn { width: 81px; height: 23px; margin-left: 10px; gap: 5px; }
.acts .ck { margin-top: 4px; }
.payrow { display: flex; align-items: flex-start; gap: 6px; margin: 10px 52px 0 0; }
.pay { flex: 1; display: flex; align-items: flex-start; padding: 1px 0 0 9px; height: 81px; }
.pay legend, .exempt legend { margin-left: -4px; }
.cks { width: 77px; padding-top: 6px; display: grid; row-gap: 3px; }
mark { background: #0f0; width: 114px; line-height: 13px; white-space: nowrap; }
.alt { width: 51px; height: 66px; margin-top: 10px; padding: 8px 0 0 3px; }
.alt legend { margin-left: 2px; }
.exempt { width: 166px; margin: 6px 0 0 1px; padding: 8px 0 12px 10px; display: grid; grid-template-columns: 72px 1fr; }
```
